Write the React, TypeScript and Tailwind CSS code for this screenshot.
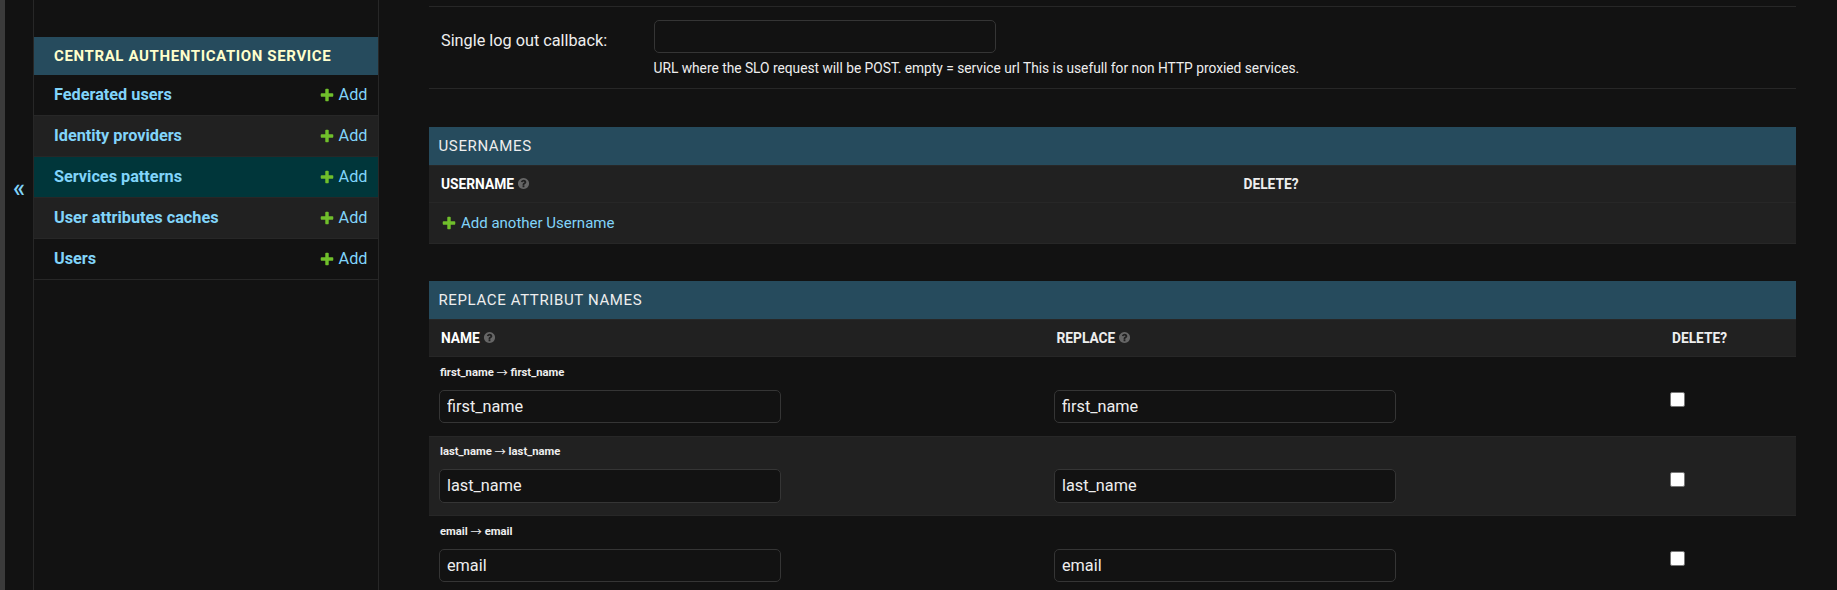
import React from "react";

const PLUS =
  "M1600 796v192q0 40-28 68t-68 28h-416v416q0 40-28 68t-68 28h-192q-40 0-68-28t-28-68v-416h-416q-40 0-68-28t-28-68v-192q0-40 28-68t68-28h416v-416q0-40 28-68t68-28h192q40 0 68 28t28 68v416h416q40 0 68 28t28 68z";
const HELP =
  "M1024 1376v-192q0-14-9-23t-23-9h-192q-14 0-23 9t-9 23v192q0 14 9 23t23 9h192q14 0 23-9t9-23zm256-672q0-88-55.500-163t-138.500-116-170-41q-243 0-371 213-15 24 8 42l132 100q7 6 19 6 16 0 25-12 53-68 86-92 34-24 86-24 48 0 85.500 26t37.500 59q0 38-20 61t-68 45q-63 28-115.500 86.500t-52.500 125.500v36q0 14 9 23t23 9h192q14 0 23-9t9-23q0-19 21.500-49.500t54.500-49.500q32-18 49-28.500t46-35 44.500-48 28-60.500 12.500-81zm384 192q0 209-103 385.500t-279.500 279.500-385.500 103-385.500-103-279.500-279.500-103-385.500 103-385.500 279.500-279.500 385.500-103 385.500 103 279.500 279.500 103 385.500z";

function Plus() {
  return (
    <svg viewBox="0 0 1792 1792" className="size-4 shrink-0 fill-[#70bf2b]">
      <path d={PLUS} />
    </svg>
  );
}

function Help() {
  return (
    <svg viewBox="0 0 1792 1792" className="mb-[3px] ml-[3px] size-[13px] shrink-0 fill-[#666666]">
      <path d={HELP} />
    </svg>
  );
}

const models = [
  { name: "Federated users", bg: "bg-[#121212]" },
  { name: "Identity providers", bg: "bg-[#212121]" },
  { name: "Services patterns", bg: "bg-[#00363a]" },
  { name: "User attributes caches", bg: "bg-[#212121]" },
  { name: "Users", bg: "bg-[#121212]" },
];

const rows = [
  { name: "first_name", height: "h-[80px]", bg: "", label: "pt-[9px] h-[33px]", pad: "pt-[33px]", input: "h-[33px]" },
  { name: "last_name", height: "h-[79px]", bg: "bg-[#212121]", label: "pt-[8px] h-[32px]", pad: "pt-[32px]", input: "h-[34px] pb-[2px]" },
  { name: "email", height: "h-[80px]", bg: "", label: "pt-[9px] h-[33px]", pad: "pt-[33px]", input: "h-[33px]" },
];

const inputClass =
  "block w-[342px] rounded-[5px] border border-[#353535] bg-[#121212] px-[7px] text-[16.25px] text-[#eeeeee] outline-none";

function SectionTitle({ children }: { children: React.ReactNode }) {
  return (
    <h2 className="flex h-[38px] items-center bg-[#264b5d] pt-px pl-[9.5px] text-[15px] tracking-[0.625px] text-[#eeeeee]">
      {children}
    </h2>
  );
}

export default function App() {
  return (
    <div className="flex h-[590px] w-full overflow-hidden bg-[#121212] font-['Roboto',sans-serif] text-[#eeeeee]">
      <div className="w-[5px] shrink-0 bg-[#3b3b3b]" />
      <button className="flex w-[29px] shrink-0 items-start justify-center border-r border-[#272727] pt-[174px] text-[25px] leading-[30px] font-medium text-[#81d4fa]">
        «
      </button>
      <nav className="w-[345px] shrink-0 border-r border-[#272727] pt-[37px]">
        <h2 className="flex h-[38px] items-center bg-[#264b5d] pt-px pl-[20px] text-[15px] font-bold tracking-[0.625px] text-[#ffffcc]">
          CENTRAL AUTHENTICATION SERVICE
        </h2>
        {models.map((m) => (
          <div
            key={m.name}
            className={`flex h-[41px] items-center justify-between border-b border-[#272727] pr-[10.5px] pl-[20px] text-[16.25px] text-[#81d4fa] ${m.bg}`}
          >
            <a className="font-bold">{m.name}</a>
            <a className="flex items-center gap-[4px]">
              <Plus />
              Add
            </a>
          </div>
        ))}
      </nav>
      <main className="ml-[50px] w-[1367px] shrink-0 pt-[6px]">
        <div className="flex h-[83px] border-y border-[#272727] pt-[13px] pl-[12px]">
          <label className="w-[213px] pt-[11px] text-[16.25px] leading-[20px]">Single log out callback:</label>
          <div>
            <input className={`${inputClass} h-[33px]`} />
            <p className="mt-[7px] -ml-[0.5px] text-[13.750px] leading-[17px]">
              URL where the SLO request will be POST. empty = service url This is usefull for non HTTP proxied services.
            </p>
          </div>
        </div>

        <section className="mt-[38px]">
          <SectionTitle>USERNAMES</SectionTitle>
          <div className="flex h-[38px] items-center border-y border-[#272727] bg-[#212121] pt-px pl-[12px] text-[13.750px] font-bold">
            <div className="flex w-[802.5px] items-center text-white">
              USERNAME
              <Help />
            </div>
            <div>DELETE?</div>
          </div>
          <div className="flex h-[41px] items-center gap-[4px] border-b border-[#272727] bg-[#212121] pl-[12px] text-[15px] text-[#81d4fa]">
            <Plus />
            Add another Username
          </div>
        </section>

        <section className="mt-[37px]">
          <SectionTitle>REPLACE ATTRIBUT NAMES</SectionTitle>
          <div className="flex h-[38px] items-center border-y border-[#272727] bg-[#212121] pt-px pl-[12px] text-[13.750px] font-bold">
            <div className="flex w-[615.5px] items-center text-white">
              NAME
              <Help />
            </div>
            <div className="flex w-[615.5px] items-center">
              REPLACE
              <Help />
            </div>
            <div>DELETE?</div>
          </div>
          {rows.map((r) => (
            <div key={r.name} className={`flex border-b border-[#272727] pl-[10px] ${r.height} ${r.bg}`}>
              <div className="w-[615px]">
                <p className={`pl-px text-[11.250px] leading-[14px] font-bold whitespace-nowrap ${r.label}`}>
                  {r.name}{" "}
                  <span className="relative top-px font-['Noto_Sans_CJK_SC',sans-serif] leading-none font-normal">→</span>{" "}
                  {r.name}
                </p>
                <input className={`${inputClass} ${r.input}`} defaultValue={r.name} />
              </div>
              <div className={`w-[616px] ${r.pad}`}>
                <input className={`${inputClass} ${r.input}`} defaultValue={r.name} />
              </div>
              <input
                type="checkbox"
                className="mt-[35px] h-[15px] w-[15px] appearance-none rounded-[2px] border border-[#767676] bg-white"
              />
            </div>
          ))}
        </section>
      </main>
    </div>
  );
}
